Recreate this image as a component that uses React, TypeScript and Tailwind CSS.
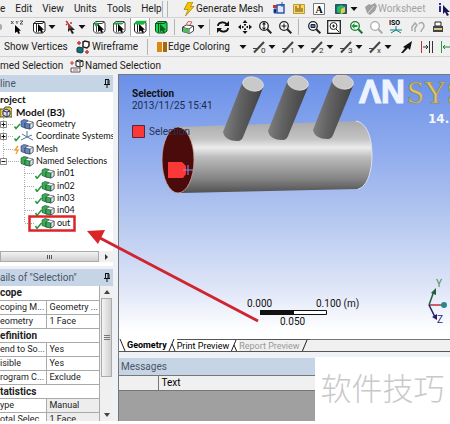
import type { ReactNode } from "react";

const Cube = ({ fill = "#fff", top, stroke = "#222" }: { fill?: string; top?: string; stroke?: string }) => (
  <>
    <path d="M1.5 3.5 4 1.5h8l1 1.5v8l-2.5 2H3.5l-2-2z" fill={fill} stroke={stroke} />
    <path d="M1.5 3.5h8.5l2.5-1.5M4.5 4v8" fill="none" stroke={stroke} />
    {top && <path d="M2 3.5 4 1.5h8.5L10 4z" fill={top} stroke={top} strokeWidth="1.5" />}
  </>
);

const Pointer = ({ fill = "#000" }: { fill?: string }) => (
  <path d="M6 4v8l2-1.5L9.5 13l1.5-.8-1.2-2.4H12z" fill={fill} />
);

const Lens = ({ color = "#222", children }: { color?: string; children?: ReactNode }) => (
  <>
    <circle cx="6" cy="6" r="4.3" fill="#fff" stroke={color} strokeWidth="1.3" />
    <path d="m9.3 9.3 4 4" stroke={color} strokeWidth="2" />
    {children}
  </>
);

function Tool({ label, className = "", children }: { label: string; className?: string; children: ReactNode }) {
  return (
    <button type="button" aria-label={label} className={`flex h-4 shrink-0 items-center justify-center ${className}`}>
      <svg viewBox="0 0 14 14" className="h-3.5 w-3.5 shrink-0" aria-hidden="true">
        {children}
      </svg>
    </button>
  );
}

function Caret({ className = "" }: { className?: string }) {
  return (
    <button type="button" aria-label="More options" className={`shrink-0 ${className}`}>
      <svg viewBox="0 0 8 6" className="h-1.5 w-2" aria-hidden="true">
        <path d="M.5 1h7L4 5z" fill="#111" />
      </svg>
    </button>
  );
}

function Divider({ className = "" }: { className?: string }) {
  return <span className={`h-4 w-px shrink-0 bg-[#b4b4b4] ${className}`} />;
}

function EdgeTool({ mark }: { mark: string }) {
  return (
    <div className="flex shrink-0 items-center gap-px">
      <Tool label={`Edge ${mark}`}>
        <path d="M1 12.5 11 2" stroke="#444" strokeWidth="2" />
        <path d="M0 8.500h4" stroke="#444" />
        <text x="8" y="13" fontSize="8" fill="#333">{mark}</text>
      </Tool>
      <Caret />
    </div>
  );
}

function Toolbars() {
  return (
    <header className="bg-[#f0f0f0] text-[10px] text-[#222]">
      <div className="flex h-[18px] items-center overflow-hidden border-b border-[#d2d2d2] whitespace-nowrap">
        <nav className="flex w-[162px] shrink-0 gap-2.5">
          <button type="button">e</button>
          <button type="button">Edit</button>
          <button type="button">View</button>
          <button type="button">Units</button>
          <button type="button">Tools</button>
          <button type="button">Help</button>
        </nav>
        <Divider />
        <Divider className="ml-1" />
        <button type="button" className="ml-3.5 flex shrink-0 items-center">
          <svg viewBox="0 0 14 14" className="h-3.5 w-3.5" aria-hidden="true">
            <path d="M6 0h5L8.5 4.500H12L3.500 14 6 7.500H2z" fill="#f5c400" stroke="#8c7000" strokeWidth=".6" />
          </svg>
          Generate Mesh
        </button>
        <div className="ml-auto flex w-[178px] shrink-0 items-center">
          <Tool label="Image">
            <path d="M1 3h4v3H1z" fill="#c33" />
            <path d="M5 3h7v8H5z" fill="#dce8ff" stroke="#33589f" strokeWidth="1.5" />
            <path d="M10 0v5M7.500 2.500h5M2 7h2v4H2z" stroke="#2454bb" />
          </Tool>
          <Tool label="Comment" className="ml-1.5">
            <path d="M1.500 2.500h11v9h-11z" fill="#ffd75a" stroke="#b49b46" />
            <path d="M4 4v6M6 6v4M8 3v7M10 6v4" stroke="#6b4b13" />
          </Tool>
          <Tool label="Text annotation" className="ml-1.5">
            <path d="M1.500 1.500h11v11h-11z" fill="#fff" stroke="#777" />
            <text x="3.500" y="11" fontSize="10" fontWeight="700" className="font-['Liberation_Serif',serif]">A</text>
          </Tool>
          <Tool label="Section plane" className="ml-2">
            <path d="M1.500 2.500h11v9h-11z" fill="#1e6486" stroke="#394a5a" />
            <path d="m3 5 4-2 4 2v5l-4 2-4-2z" fill="#28b85d" />
            <path d="m7 7 4-2v5l-4 2z" fill="#e9cb45" />
          </Tool>
          <Caret className="ml-0.5" />
          <button type="button" disabled className="ml-1.5 flex shrink-0 items-center text-[#a3a3a3]">
            <svg viewBox="0 0 14 14" className="h-3.5 w-3.5" aria-hidden="true">
              <path d="m1 5 4-3 2 1 4-2 2 3-2 5-5 4-3-2z" fill="#a0a0a0" />
              <path d="m4 11 6-7" stroke="#ddd" />
            </svg>
            Worksheet
          </button>
          <Tool label="Selection information" className="ml-auto">
            <path d="M3 1h2v2H3zM3 4h2v6H3z" fill="#2b2b96" />
            <path d="M7 3v9l2-2 2 4 2-1-2-3h3z" fill="#161650" />
          </Tool>
        </div>
      </div>

      <div className="flex h-[19px] items-center overflow-hidden border-b border-[#d2d2d2]">
        <span className="h-1.5 w-0.5 shrink-0 rounded-r bg-[#aaa]" />
        <Tool label="Pick coordinates" className="ml-2">
          <path d="m1 1 2.500 3m0-3L1 4m5-3 1 1.500L8.500 1M7 2.500V4m3-3h3l-3 3h3" fill="none" stroke="#333" strokeWidth=".8" />
          <path d="M5 5v8l2-1.500L8.500 14l1.500-.8-1.200-2.400H11z" />
        </Tool>
        <Tool label="Select type" className="ml-2"><Cube /><Pointer /></Tool>
        <Caret className="ml-0.5" />
        <Tool label="Select mode" className="ml-2">
          <path d="m2 1 2 2m0 0L2 5m4-2h2" stroke="#b33" strokeWidth="1.5" />
          <path d="M4 3v9l2-2 2 4 2-1-2-3h3z" fill="#222" />
          <path d="M4 3v6l4-1z" fill="#a43b32" />
        </Tool>
        <Caret />
        <Tool label="Vertex" className="ml-1.5"><Cube stroke="#444" /><circle cx="4.500" cy="4.500" r="2" fill="#1da343" /><Pointer /></Tool>
        <Tool label="Edge" className="ml-1.5"><Cube stroke="#444" /><path d="M2 3.500h8" stroke="#1da343" strokeWidth="2" /><Pointer /></Tool>
        <Tool label="Face" className="ml-1 h-[18px] w-5 border-x border-[#aaa] bg-white"><Cube top="#1bb541" /><Pointer /></Tool>
        <Tool label="Body" className="ml-1"><Cube fill="#22d253" stroke="#064e1b" /><Pointer fill="#075f20" /></Tool>
        <Divider className="ml-1.5" />
        <Tool label="Extend selection" className="ml-1.5">
          <path d="m1.500 7 4-2 7 1v5l-4 2.500-7-2z" fill="#fff" stroke="#444" />
          <path d="m2 7.500 6 1.500 4-3M8 9v4" fill="none" stroke="#444" />
          <path d="m2 8 6 1v4l-6-1z" fill="#4fbd5e" />
          <path d="M5 5 7 1.500l4 .5-2 3" fill="none" stroke="#d55" />
        </Tool>
        <Caret className="ml-0.5" />
        <Divider className="ml-1" />
        <Tool label="Rotate" className="ml-1.5">
          <path d="M2 6c0-4 7-5 9-1M12 8c0 4-7 5-9 1" fill="none" stroke="#111" strokeWidth="1.8" />
          <path d="M13 1v5H8zM1 13V8h5z" fill="#111" />
        </Tool>
        <Tool label="Pan" className="ml-2">
          <path d="m7 0 2.500 3h-5zM7 14l2.500-3h-5zM0 7l3-2.500v5zM14 7l-3-2.500v5zM6 4h2v1.500H6zM6 8.500h2V10H6zM4 6h1.500v2H4zM8.500 6H10v2H8.500z" fill="#111" />
        </Tool>
        <Tool label="Zoom" className="ml-1.5"><Lens><path d="m6 2 2 2.500H4zM6 10l2-2.500H4zM5.500 4h1v4h-1z" fill="#111" /></Lens></Tool>
        <Tool label="Zoom in" className="ml-1.5"><Lens><path d="M3.500 6h5M6 3.500v5" stroke="#111" /></Lens></Tool>
        <Divider className="ml-1.5" />
        <Tool label="Box zoom" className="ml-2"><Lens><path d="M4 4.500h4v3H4z" fill="#679" stroke="#124" /></Lens></Tool>
        <Tool label="Zoom to fit" className="ml-1.5">
          <path d="M.7.7h12.600v12.600H.7z" fill="#fff" stroke="#222" strokeWidth="1.3" />
          <circle cx="6.500" cy="6" r="3.500" fill="none" stroke="#222" />
          <path d="m9 9 3 3M5 6h3M6.500 4.500v3" stroke="#222" />
        </Tool>
        <Tool label="Previous view" className="ml-2"><Lens color="#16742d"><path d="m2.500 6 3-3v2h3v2h-3v2z" fill="#169c36" /></Lens></Tool>
        <Tool label="Next view" className="ml-1.5"><Lens color="#aaa" /></Tool>
        <Tool label="Isometric view" className="ml-1.5">
          <text x="0" y="5" fontSize="7" fontWeight="700">ISO</text>
          <path d="M7 6v4l-5 3m5-3 5 3M7 10H1m6 0h6" fill="none" stroke="#16818a" />
        </Tool>
        <Tool label="Look at" className="ml-2">
          <path d="M1 11V7l3-4 2 2-2 3v4M8 4c2-3 5-1 5 2s-3 3-3 6" fill="none" stroke="#aaa" strokeWidth="1.5" />
        </Tool>
        <Tool label="Viewports" className="ml-1.5">
          <path d="M4 2h6v4H4z" fill="#fff" stroke="#222" />
          <path d="M2 6h10v6H2z" fill="#444" />
          <path d="M3 8h8v2H3z" fill="#d9cc82" />
        </Tool>
      </div>

      <div className="flex h-5 items-center overflow-hidden border-b border-[#d2d2d2] whitespace-nowrap">
        <button type="button" className="w-[76px] shrink-0 pl-1 text-left">Show Vertices</button>
        <button type="button" className="flex w-[71px] shrink-0 items-center gap-0.5">
          <svg viewBox="0 0 14 14" className="h-3.5 w-3.5 shrink-0" aria-hidden="true">
            <path d="M1 3h4M3 1v4M9 12h4m-2-2v4" stroke="#c33" strokeWidth="1.5" />
            <path d="m7 2 2-1 4 1v4l-2 2-4-1z" fill="#fff" stroke="#222" strokeWidth="1.5" />
            <path d="m1 8 2-1 4 1v4l-2 1-4-1z" fill="#137077" stroke="#123f47" />
          </svg>
          Wireframe
        </button>
        <Divider />
        <button type="button" className="ml-2 flex w-[81px] shrink-0 items-center">
          <svg viewBox="0 0 12 12" className="h-3 w-3" aria-hidden="true">
            <path d="M1 1h5v10H1z" fill="#d98a13" />
            <path d="M7 1h4v10H7z" fill="#aa6509" />
          </svg>
          Edge Coloring
        </button>
        <Caret className="ml-0.5" />
        <div className="ml-1.5 flex gap-1.5">
          <EdgeTool mark="0" />
          <EdgeTool mark="1" />
          <EdgeTool mark="2" />
          <EdgeTool mark="3" />
          <EdgeTool mark="x" />
        </div>
        <Tool label="Edge direction" className="ml-2"><path d="m1 13 4-5-2-1 9-6-2 9-2-2-5 5z" fill="#111" /></Tool>
        <Tool label="Thicken" className="ml-1.5">
          <path d="M1.500 1v12" stroke="#b33" /><path d="M9.500 1v12M12.500 1v12M3 7h5M6 5l2 2-2 2" fill="none" stroke="#333" />
        </Tool>
        <Tool label="Distance" className="ml-1.5">
          <path d="M1.500 1v12" stroke="#21a343" /><path d="M3 7h10M5 5 3 7l2 2m6-4 2 2-2 2" fill="none" stroke="#21813a" />
        </Tool>
      </div>

      <div className="flex h-[17px] items-center overflow-hidden whitespace-nowrap">
        <button type="button" className="w-[70px] shrink-0 text-left">med Selection</button>
        <button type="button" className="flex items-center gap-px">
          <svg viewBox="0 0 14 14" className="h-3.5 w-3.5" aria-hidden="true">
            <path d="m6 2 3-1 4 1v5l-3 1-4-1zM6 2l4 1v5m0-5 3-1" fill="#fff" stroke="#222" />
            <path d="M0 4h4M2 2v4" stroke="#c33" />
            <path d="M1 9h9v4H1z" fill="#fff" stroke="#555" />
            <path d="M3 11h5" stroke="#c55" />
          </svg>
          Named Selection
        </button>
      </div>
    </header>
  );
}

function PanelHeader({ title }: { title: string }) {
  return (
    <div className="flex h-[17px] shrink-0 items-center justify-between bg-[#c6d5e5] pr-0.5 text-[10px] text-[#4b5668]">
      <h2>{title}</h2>
      <button type="button" aria-label="Pin panel">
        <svg viewBox="0 0 8 9" className="h-[9px] w-2" aria-hidden="true">
          <path d="M2.500 1v4M5 1v4M6 1v4M2 .5h4M1 5.500h6M4 6v3" stroke="#111" />
        </svg>
      </button>
    </div>
  );
}

const nodes = [
  { name: "Geometry", sign: "+", color: "#5f7fc4", state: "ok" },
  { name: "Coordinate Systems", sign: "+", color: "axes", state: "ok" },
  { name: "Mesh", sign: "", color: "#6f86c0", state: "pending" },
  { name: "Named Selections", sign: "-", color: "#35b14b", state: "" },
];

const selections = ["in01", "in02", "in03", "in04", "out"];

function Blocks({ x, color }: { x: number; color: string }) {
  return (
    <g stroke="#2b3a4c" strokeWidth=".6" transform={`translate(${x} 0)`}>
      <path d="M0 3l3-1.500 4 1v6l-3 1.500-4-1.500z" fill={color} />
      <path d="M4 5l3-2 5 1v5l-3 2-5-1z" fill="#fff" />
      <path d="M4 5l5 1v5l-5-1z" fill={color} />
      <path d="M9 6l3-2v5l-3 2z" fill="#dce8e4" />
    </g>
  );
}

function Tree() {
  return (
    <ul className="flex h-[136px] flex-col overflow-hidden font-['Lato',sans-serif] text-[9px] leading-3 whitespace-nowrap text-[#111]">
      <li className="flex flex-1 items-center text-[10px] font-bold">roject</li>
      <li className="flex flex-1 items-center gap-1 text-[10px] font-bold">
        <svg viewBox="0 0 12 12" className="h-3 w-3" aria-hidden="true">
          <path d="M0 3h4l1-2h5l2 2v8H0z" fill="#e5c64e" stroke="#5d5327" />
          <path d="m3 5 3-2 4 2v4l-3 2-4-2z" fill="#d9e0ef" stroke="#28375d" />
          <path d="m3 5 4 1 3-1M7 6v5" fill="none" stroke="#28375d" />
        </svg>
        Model (B3)
      </li>
      {nodes.map((n) => (
        <li key={n.name} className="flex flex-1 items-center gap-0.5">
          <svg viewBox="0 0 34 12" className="h-3 w-[34px] shrink-0" aria-hidden="true">
            <path d={n.sign === "-" ? "M3.500 0v6M6 6.500h13" : "M3.500 0v12M4 6.500h10"} stroke="#aaa" strokeDasharray="1 1" fill="none" />
            {n.sign && <path d="M.5 3.500h6v6h-6z" fill="#fff" stroke="#888" />}
            {n.sign && <path d={n.sign === "+" ? "M1.500 6.500h4M3.500 4.500v4" : "M1.500 6.500h4"} stroke="#111" />}
            {n.state === "ok" && <path d="m14.500 8.500 1.500 2L20 6" fill="none" stroke="#219b3c" strokeWidth="1.5" />}
            {n.state === "pending" && <path d="m18 3-3 4h3l-2 4" fill="none" stroke="#e9a53a" strokeWidth="1.5" />}
            {n.color === "axes" ? (
              <path d="M27 1v6l-6 3m6-3 6 3M22 4l5 3 5-2" fill="none" stroke="#51789b" />
            ) : (
              <Blocks x={21} color={n.color} />
            )}
          </svg>
          {n.name}
        </li>
      ))}
      {selections.map((name) => (
        <li key={name} className="flex flex-1 items-center gap-0.5">
          <svg viewBox="0 0 55 12" className="h-3 w-[55px] shrink-0" aria-hidden="true">
            <path d={name === "out" ? "M24.500 0v6M25 6.500h10" : "M24.500 0v12M25 6.500h10"} stroke="#aaa" strokeDasharray="1 1" fill="none" />
            <path d="m35.500 9 1.500 2.500L41.500 6" fill="none" stroke="#219b3c" strokeWidth="1.5" />
            <Blocks x={42} color="#35b14b" />
          </svg>
          {name}
        </li>
      ))}
    </ul>
  );
}

function Group({ title }: { title: string }) {
  return (
    <tr className="h-3.5 border-b border-[#aaa]">
      <th colSpan={2} className="p-0 text-left text-[10px] font-bold">{title}</th>
    </tr>
  );
}

function Detail({ name, value, readOnly }: { name: string; value: string; readOnly?: boolean }) {
  return (
    <tr className={readOnly ? "h-3.5 border-b border-[#aaa] bg-[#ededed]" : "h-3.5 border-b border-[#aaa]"}>
      <th scope="row" className="border-r border-[#aaa] bg-white p-0 text-left font-normal">{name}</th>
      <td className="py-0 pl-[3px]">{value}</td>
    </tr>
  );
}

function Details() {
  return (
    <div className="flex h-[135px] overflow-hidden bg-white">
      <div className="min-w-0 flex-1 overflow-hidden border-r border-[#aaa]">
        <table className="w-full table-fixed border-collapse text-[9px] leading-[13px] whitespace-nowrap text-[#222]">
          <colgroup>
            <col className="w-[46px]" />
            <col />
          </colgroup>
          <tbody>
            <Group title="cope" />
            <Detail name="coping M..." value="Geometry ..." />
            <Detail name="eometry" value="1 Face" />
            <Group title="efinition" />
            <Detail name="end to So..." value="Yes" />
            <Detail name="isible" value="Yes" />
            <Detail name="rogram C..." value="Exclude" />
            <Group title="tatistics" />
            <Detail name="ype" value="Manual" readOnly />
            <Detail name="otal Selec..." value="1 Face" readOnly />
          </tbody>
        </table>
      </div>
      <div className="flex w-[13px] shrink-0 flex-col items-center bg-[#f0f0f0] py-1">
        <svg viewBox="0 0 6 4" className="h-1 w-1.5" aria-hidden="true"><path d="M0 4h6L3 0z" fill="#444" /></svg>
        <div className="mt-1 flex h-[79px] w-[11px] flex-col items-center justify-center gap-px border border-[#aaa] bg-linear-to-r from-[#f4f4f4] to-[#cfcfcf]">
          <span className="h-px w-1.5 bg-[#777]" />
          <span className="h-px w-1.5 bg-[#777]" />
          <span className="h-px w-1.5 bg-[#777]" />
        </div>
        <svg viewBox="0 0 6 4" className="mt-auto h-1 w-1.5" aria-hidden="true"><path d="M0 0h6L3 4z" fill="#444" /></svg>
      </div>
    </div>
  );
}

// upright branch pipe, drawn once and repeated along the main one
function Branch({ x, y }: { x: number; y: number }) {
  return (
    <g transform={`translate(${x} ${y})`}>
      <path d="M-10-3-30 48c1 6 7 9 14 9 4 0 5-2 6-4L10 4z" fill="url(#branch)" />
      <ellipse rx="10.500" ry="7" transform="rotate(12)" fill="#c9c9c9" stroke="#e4e4e4" strokeWidth=".7" />
    </g>
  );
}

function Scene() {
  return (
    <svg viewBox="0 0 332 264" preserveAspectRatio="xMinYMin slice" className="h-[264px] w-full" role="img" aria-label="Pipe model">
      <defs>
        <linearGradient id="sky" x2="0" y2="1">
          <stop offset="0" stopColor="#6a90e8" />
          <stop offset=".28" stopColor="#8fabee" />
          <stop offset=".55" stopColor="#b6c8f0" />
          <stop offset=".8" stopColor="#dde4f7" />
          <stop offset=".97" stopColor="#fff" />
        </linearGradient>
        <linearGradient id="pipe" x2="0" y2="1">
          <stop offset="0" stopColor="#a9a9a9" />
          <stop offset=".25" stopColor="#c4c4c4" />
          <stop offset=".37" stopColor="#ececec" />
          <stop offset=".5" stopColor="#bdbdbd" />
          <stop offset=".8" stopColor="#858585" />
          <stop offset="1" stopColor="#505050" />
        </linearGradient>
        <linearGradient id="branch" x1="0" y1=".4" x2="1" y2=".6">
          <stop offset="0" stopColor="#858585" />
          <stop offset=".4" stopColor="#636363" />
          <stop offset="1" stopColor="#3c3c3c" />
        </linearGradient>
      </defs>
      <path d="M0 0h332v264H0z" fill="url(#sky)" />
      <path d="M59 52 237 46c11 2 16 17 16 34s-5 32-14 34L62 118z" fill="url(#pipe)" />
      <path d="M237 46c11 2 16 17 16 34s-5 32-14 34" fill="none" stroke="#dce2ee" />
      <ellipse cx="59" cy="85" rx="16" ry="33" fill="#4b0b0b" stroke="#c9a9a0" strokeWidth=".8" />
      <path d="M49 87h14l4 4v8l-3 4H49z" fill="#fb3838" />
      <path d="M64 95h10M69 90v10" stroke="#9a8ee6" />
      <Branch x={134} y={9} />
      <Branch x={179} y={8} />
      <Branch x={224} y={7} />

      <g fontSize="10" fill="#111">
        <text x="13" y="22" fontWeight="700">Selection</text>
        <text x="13" y="34" fill="#1e2b4d">2013/11/25 15:41</text>
        <path d="M13.500 50.500h12v12h-12z" fill="#fb3838" stroke="#5b2537" />
        <text x="30" y="60" fill="#263354">Selection</text>
      </g>

      <g aria-label="ANSYS">
        <text x="240" y="28" fontSize="33" fontWeight="700" fill="#edf3ff" stroke="#edf3ff" strokeWidth="1.2" className="font-['Liberation_Sans',sans-serif]">ΛN</text>
        <text x="288" y="28" fontSize="31" fill="#dfc668" stroke="#8c8150" strokeWidth=".6" className="font-['Liberation_Serif',serif]">SYS</text>
        <text x="309" y="48" fontSize="12" fontWeight="700" fill="#f4f7ff" className="font-['DejaVu_Sans',sans-serif]">14.</text>
      </g>

      <g fontSize="10" fill="#111">
        <text x="128" y="232">0.000</text>
        <text x="197" y="232">0.100 (m)</text>
        <text x="161" y="250">0.050</text>
        <path d="M141.500 235.500h66v4h-66z" fill="#fff" stroke="#111" />
        <path d="M141 235h34v5h-34z" />
      </g>

      <g strokeWidth="1.5" fill="none">
        <path d="M310 230h13" stroke="#b3343c" />
        <path d="m310 230 5-14" stroke="#245e3c" />
        <path d="m310 230 6 12" stroke="#20206e" />
        <circle cx="325" cy="230" r="3" fill="#25878f" />
        <path d="m312 218 5-5v7z" fill="#245e3c" />
        <path d="m313 242 5-3v6z" fill="#20206e" />
        <text x="317" y="212" fontSize="10" fill="#458b55">Y</text>
        <text x="318" y="248" fontSize="10" fill="#29297e">Z</text>
      </g>
    </svg>
  );
}

function Slant({ both }: { both?: boolean }) {
  return (
    <svg viewBox="0 0 10 12" className="h-3 w-2.5 shrink-0" aria-hidden="true">
      <path d={both ? "M2 12 7 0M5 5l3 7" : "M2 12 7 0"} stroke="#222" />
    </svg>
  );
}

function ViewTabs() {
  return (
    <div className="flex h-[13px] items-center overflow-hidden border-b border-[#555] bg-[#f0f0f0] text-[9px] leading-3 whitespace-nowrap">
      <div className="flex items-center bg-white">
        <svg viewBox="0 0 8 12" className="h-3 w-2" aria-hidden="true"><path d="m1 0 5 12" stroke="#222" /></svg>
        <button type="button" className="font-bold">Geometry</button>
        <Slant both />
      </div>
      <div className="flex items-center border-t border-[#555] bg-white">
        <button type="button">Print Preview</button>
        <Slant both />
      </div>
      <div className="flex items-center border-t border-[#555]">
        <button type="button" className="text-[#999]">Report Preview</button>
        <Slant />
      </div>
      <span className="h-3 flex-1 border-t border-[#777]" />
    </div>
  );
}

export default function App() {
  return (
    <div className="relative min-h-screen overflow-hidden bg-white font-['Roboto','Noto_Sans_CJK_SC',sans-serif]">
      <Toolbars />
      <div className="flex bg-[#eef1f6]">
        <aside className="w-[113px] shrink-0 overflow-hidden pt-px">
          <PanelHeader title="line" />
          <div className="bg-white pt-px pb-1">
            <Tree />
            <div className="mt-[22px] flex h-[11px] items-center gap-1.5 bg-[#f0f0f0]">
              <div className="flex h-full w-[99px] items-center justify-center gap-px border border-[#aaa] bg-linear-to-b from-[#f4f4f4] to-[#cfcfcf]">
                <span className="h-1 w-px bg-[#555]" />
                <span className="h-1 w-px bg-[#555]" />
                <span className="h-1 w-px bg-[#555]" />
              </div>
              <svg viewBox="0 0 4 6" className="h-1.5 w-1" aria-hidden="true"><path d="M0 0v6l3-3z" fill="#333" /></svg>
            </div>
          </div>
          <div className="mt-[3px]">
            <PanelHeader title="ails of &quot;Selection&quot;" />
          </div>
          <Details />
        </aside>
        <main className="ml-[5px] min-w-0 flex-1 border-l border-[#777]">
          <div className="border-t border-[#777]">
            <Scene />
          </div>
          <ViewTabs />
          <section className="mt-1.5">
            <h2 className="h-[17px] bg-[#c6d5e5] pl-0.5 text-[10px] leading-[17px] text-[#4b5668]">Messages</h2>
            <table className="w-full border-y border-[#777] bg-[#f0f0f0] text-[10px] leading-[14px]">
              <thead>
                <tr>
                  <th className="w-[39px] border-r border-[#777]" aria-label="Status" />
                  <th className="py-0 pl-[3px] text-left font-normal">Text</th>
                </tr>
              </thead>
            </table>
            <div className="h-[30px] bg-[#a0a0a0]" />
          </section>
        </main>
      </div>

      <svg viewBox="0 0 450 424" className="pointer-events-none absolute top-0 left-0 h-[424px] w-[450px]" aria-hidden="true">
        <path d="M29.500 216.500h45v14h-45z" fill="none" stroke="#dc2428" strokeWidth="2.5" />
        <path d="m258 321-158-83" stroke="#cf2530" strokeWidth="3" />
        <path d="m87 231 18-1-7 14z" fill="#dc2428" />
      </svg>

      <div className="absolute right-0 bottom-0 flex h-[67px] w-[135px] items-center justify-center bg-white text-[31px] font-light text-[#c9c9c9]">
        软件技巧
      </div>
    </div>
  );
}
